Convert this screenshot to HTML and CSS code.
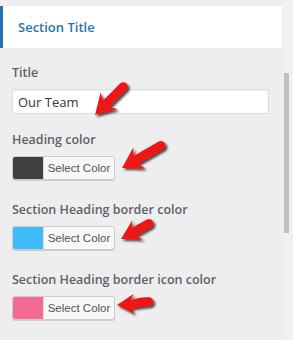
FILE: index.html
```html
<!DOCTYPE html>
<html lang="en">
<head>
<meta charset="UTF-8">
<title>Section Title</title>
<link rel="stylesheet" href="styles.css">
</head>
<body>
<div class="frame">
<div class="panel">
<div class="section-head">Section Title</div>

<div class="fields">
<div class="field field-first">
<label class="label">Title</label>
<input class="text-input" type="text" value="Our Team">
</div>

<div class="field">
<label class="label">Heading color</label>
<button class="color-btn"><span class="swatch swatch-dark"></span><span class="btn-text">Select Color</span></button>
</div>

<div class="field">
<label class="label">Section Heading border color</label>
<button class="color-btn"><span class="swatch swatch-blue"></span><span class="btn-text">Select Color</span></button>
</div>

<div class="field">
<label class="label">Section Heading border icon color</label>
<button class="color-btn"><span class="swatch swatch-pink"></span><span class="btn-text">Select Color</span></button>
</div>
</div>

<div class="section-head section-next"></div>
</div>

<div class="scrollbar"><div class="thumb"></div></div>
</div>

<!-- annotation arrows -->
<svg class="arrows" width="293" height="340" viewBox="0 0 293 340">
<defs>
<filter id="shadow" x="-30%" y="-30%" width="160%" height="160%">
<feDropShadow dx="2" dy="2" stdDeviation="1.2" flood-color="#000" flood-opacity="0.7"/>
</filter>
</defs>
<g fill="#f01414" filter="url(#shadow)">
<path transform="translate(95 115) rotate(-45)" d="M0 0 L20 -12 L16 -4.5 L40 -4.5 A4.5 4.5 0 0 1 40 4.5 L16 4.5 L20 12 Z"/>
<path transform="translate(122 168) rotate(-30)" d="M0 0 L20 -12 L16 -4.5 L45 -4.5 A4.5 4.5 0 0 1 45 4.5 L16 4.5 L20 12 Z"/>
<path transform="translate(121 239) rotate(-29)" d="M0 0 L19 -11 L15 -4.5 L32 -4.5 A4.5 4.5 0 0 1 32 4.5 L15 4.5 L19 11 Z"/>
<path transform="translate(117 305) rotate(-3)" d="M0 0 L17 -10 L14 -3.5 Q22 -7 32 -6 A4.5 4.5 0 0 1 32 3 Q22 3.5 14 4.5 L17 10 Z"/>
</g>
</svg>
</body>
</html>
```

FILE: styles.css
```css
body { margin:0; background:#eeeeee; font-family:'Open Sans', 'Noto Sans', sans-serif; }
.frame { display:flex; width:293px; height:340px; overflow:hidden; }
.panel { flex:1; padding-top:6px; }
.section-head { height:42px; line-height:42px; background:#fff; border-left:3px solid #2271b1; padding-left:15px; font-size:13px; font-weight:600; color:#2a72ad; }
.section-next { margin-top:18px; }
.fields { padding:16px 13px 0 12px; }
.field { margin-bottom:21px; }
.field-first { margin-bottom:17px; }
.label { display:block; font-size:12.5px; font-weight:600; line-height:18px; color:#5b626a; margin-bottom:7px; }
.text-input { display:block; box-sizing:border-box; width:100%; height:25px; margin:0; border:1px solid #ddd; background:#fff; padding:0 5px; font-family:inherit; font-size:13px; color:#32373c; box-shadow:inset 0 1px 2px rgba(0,0,0,0.07); }
.color-btn { display:flex; align-items:stretch; box-sizing:border-box; width:103px; height:24px; padding:0; margin:0; border:1px solid #ccc; border-radius:3px; background:#f7f7f7; box-shadow:0 1px 0 #ccc; overflow:hidden; cursor:pointer; }
.swatch { width:30px; border-right:1px solid #ddd; }
.swatch-dark { background:#3f3f3f; }
.swatch-blue { background:#3fbbf7; }
.swatch-pink { background:#f46a92; }
.btn-text { flex:1; line-height:22px; font-family:inherit; font-size:11.5px; color:#555; text-align:center; }
.scrollbar { width:11px; background:#f1f1f1; }
.thumb { width:5px; height:160px; margin:73px 0 0 2px; background:#c1c1c1; }
.arrows { position:absolute; left:0; top:0; pointer-events:none; }
```
